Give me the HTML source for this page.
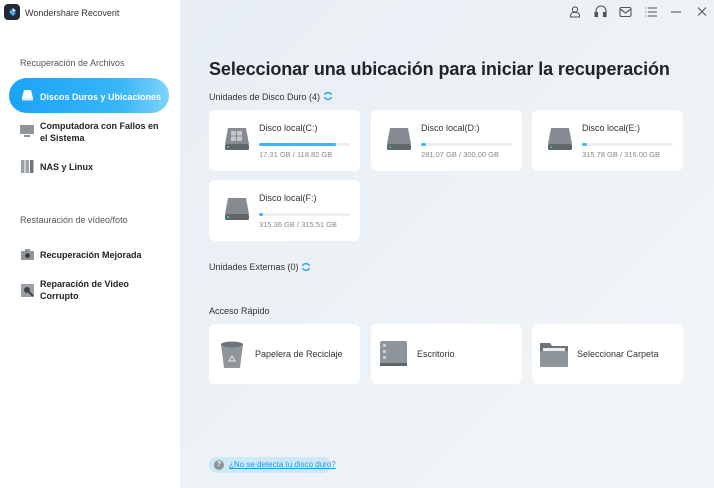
<!DOCTYPE html>
<html><head><meta charset="utf-8"><style>
*{margin:0;padding:0;box-sizing:border-box}
body{width:714px;height:488px;overflow:hidden;font-family:"Liberation Sans",sans-serif;position:relative;background:linear-gradient(135deg,#e6edf3 0%,#edf2f6 60%,#f3f6f9 100%)}
.side{position:absolute;left:0;top:0;width:180px;height:488px;background:#fff}
.abs{position:absolute}
.t{font-size:9px;color:#333}
.sec{font-size:9px;color:#555}
.nav{position:absolute;left:21px;font-size:9px;font-weight:bold;color:#222;line-height:12px}
.card{position:absolute;background:#fff;border-radius:6px;width:151px;height:61px}
.dn{position:absolute;left:50px;top:13px;font-size:9px;color:#333}
.bar{position:absolute;left:50px;top:33px;width:91px;height:3px;background:#eceef0;border-radius:2px}
.bar i{display:block;height:3px;background:#3fb8ec;border-radius:2px}
.gb{position:absolute;left:50px;top:40px;font-size:7.5px;color:#888}
.drv{position:absolute;left:15px;top:17px;width:26px;height:25px}
.qc{position:absolute;background:#fff;border-radius:6px;width:151px;height:60px;top:324px}
.qc span{position:absolute;left:46px;top:25px;font-size:9px;color:#333}
</style></head><body>
<div class="side">
 <div class="abs" style="left:4px;top:4px;width:16px;height:16px;background:#1f2b3a;border-radius:4px"><svg width="16" height="16"><path d="M9 4 L5 8 L9 12 L12 9 L9 8Z" fill="#4aa8ff"/><path d="M9 4 L12 7 L9 8Z" fill="#fff"/></svg></div>
 <div class="abs t" style="left:25px;top:8px">Wondershare Recoverit</div>
 <div class="abs sec" style="left:20px;top:58px">Recuperación de Archivos</div>
 <div class="abs" style="left:9px;top:78px;width:160px;height:35px;border-radius:18px;background:linear-gradient(90deg,#1aa3f5,#39b6f7 70%,#7fd3fa)"></div>
 <svg class="abs" style="left:21px;top:89px" width="13" height="12"><path d="M3 1h7l2 8H1z" fill="#fff"/><rect x="1" y="9" width="11" height="2.5" fill="#dff3ff"/></svg>
 <div class="nav" style="left:40px;top:91px;color:#fff">Discos Duros y Ubicaciones</div>
 <svg class="abs" style="left:20px;top:125px" width="14" height="12"><rect x="0" y="0" width="14" height="9" fill="#8e959b"/><rect x="4" y="10" width="6" height="2" fill="#8e959b"/></svg>
 <div class="nav" style="left:40px;top:120px">Computadora con Fallos en<br>el Sistema</div>
 <svg class="abs" style="left:21px;top:160px" width="13" height="13"><rect x="0" y="0" width="3.5" height="13" fill="#9aa0a6"/><rect x="4.5" y="0" width="3.5" height="13" fill="#9aa0a6"/><rect x="9" y="0" width="3.5" height="13" fill="#6d747a"/></svg>
 <div class="nav" style="left:40px;top:161px">NAS y Linux</div>
 <div class="abs sec" style="left:20px;top:215px">Restauración de vídeo/foto</div>
 <svg class="abs" style="left:21px;top:249px" width="13" height="11"><rect x="0" y="2" width="13" height="9" rx="1" fill="#8e959b"/><rect x="4" y="0" width="5" height="3" fill="#8e959b"/><circle cx="6.5" cy="6.5" r="2.3" fill="#333"/></svg>
 <div class="nav" style="left:40px;top:249px">Recuperación Mejorada</div>
 <svg class="abs" style="left:21px;top:284px" width="13" height="13"><rect x="0" y="0" width="13" height="13" fill="#9aa0a6"/><circle cx="6" cy="6" r="3" fill="#444"/><path d="M8 8l4 4" stroke="#444" stroke-width="2"/></svg>
 <div class="nav" style="left:40px;top:278px">Reparación de Video<br>Corrupto</div>
</div>

<svg class="abs" style="left:568px;top:5px" width="140" height="14" fill="none" stroke="#555" stroke-width="1.1">
 <circle cx="7" cy="4.5" r="2.6"/><path d="M2.5 12h9v-1.5a3 3 0 0 0-3-3h-3a3 3 0 0 0-3 3z"/>
 <path d="M28 9V6a5 5 0 0 1 10 0v3"/><rect x="27" y="7.5" width="2.5" height="4" fill="#555"/><rect x="35.5" y="7.5" width="2.5" height="4" fill="#555"/>
 <rect x="52" y="2.5" width="11" height="9" rx="1.5"/><path d="M52 4l5.5 4L63 4"/>
 <path d="M80 3h9M80 7h9M80 11h9"/><path d="M77.5 3h1M77.5 7h1M77.5 11h1"/>
 <path d="M103 7h10"/>
 <path d="M130 2.5l8 8M138 2.5l-8 8"/>
</svg>

<div class="abs" style="left:209px;top:59px;font-size:18px;letter-spacing:-0.1px;white-space:nowrap;font-weight:bold;color:#1f2329">Seleccionar una ubicación para iniciar la recuperación</div>
<div class="abs t" style="left:209px;top:92px">Unidades de Disco Duro (4)</div>
<svg class="abs" style="left:323px;top:91px" width="10" height="10" fill="none" stroke="#2ea6ee" stroke-width="1.5"><path d="M8.5 4A3.8 3.8 0 0 0 1.5 4M1.5 6a3.8 3.8 0 0 0 7 0"/></svg>

<svg width="0" height="0" style="position:absolute"><defs><symbol id="d" viewBox="0 0 26 25"><path d="M4 1h18l3 16H1z" fill="#858b91"/><rect x="1" y="17" width="24" height="6" rx="1.5" fill="#5e656b"/><circle cx="4" cy="20" r="1" fill="#3ddc84"/></symbol></defs></svg>

<div class="card" style="left:209px;top:110px"><svg class="drv"><use href="#d"/></svg><svg class="abs" style="left:22px;top:21px" width="12" height="11" fill="#c5c9cc"><rect x="0" y="0" width="5" height="4.5"/><rect x="6" y="0" width="5" height="4.5"/><rect x="0" y="5.5" width="5" height="4.5"/><rect x="6" y="5.5" width="5" height="4.5"/></svg><div class="dn">Disco local(C:)</div><div class="bar"><i style="width:77px"></i></div><div class="gb">17.31 GB / 118.82 GB</div></div>
<div class="card" style="left:371px;top:110px"><svg class="drv"><use href="#d"/></svg><div class="dn">Disco local(D:)</div><div class="bar"><i style="width:5px"></i></div><div class="gb">281.07 GB / 300.00 GB</div></div>
<div class="card" style="left:532px;top:110px"><svg class="drv"><use href="#d"/></svg><div class="dn">Disco local(E:)</div><div class="bar"><i style="width:5px"></i></div><div class="gb">315.78 GB / 316.00 GB</div></div>
<div class="card" style="left:209px;top:180px"><svg class="drv"><use href="#d"/></svg><div class="dn">Disco local(F:)</div><div class="bar"><i style="width:4px"></i></div><div class="gb">315.36 GB / 315.51 GB</div></div>

<div class="abs t" style="left:209px;top:262px">Unidades Externas (0)</div>
<svg class="abs" style="left:301px;top:262px" width="10" height="10" fill="none" stroke="#2ea6ee" stroke-width="1.5"><path d="M8.5 4A3.8 3.8 0 0 0 1.5 4M1.5 6a3.8 3.8 0 0 0 7 0"/></svg>

<div class="abs t" style="left:209px;top:306px">Acceso Rápido</div>
<div class="qc" style="left:209px"><svg class="abs" style="left:11px;top:17px" width="24" height="28"><path d="M1 3h22l-3 24H4z" fill="#8e959b"/><ellipse cx="12" cy="3.5" rx="11" ry="3" fill="#6d747a"/><path d="M9 20l3-5 3 5z" fill="none" stroke="#ddd" stroke-width="1.2"/></svg><span>Papelera de Reciclaje</span></div>
<div class="qc" style="left:371px"><svg class="abs" style="left:9px;top:17px" width="27" height="26"><rect x="0" y="0" width="27" height="24" rx="2" fill="#8e959b"/><rect x="0" y="22" width="27" height="3" fill="#5e656b"/><rect x="3" y="3" width="3" height="3" fill="#ccc"/><rect x="3" y="9" width="3" height="3" fill="#ccc"/><rect x="3" y="15" width="3" height="3" fill="#ccc"/></svg><span>Escritorio</span></div>
<div class="qc" style="left:532px"><svg class="abs" style="left:8px;top:17px" width="28" height="26"><path d="M0 2h10l2 3h16v20H0z" fill="#6d747a"/><rect x="3" y="7" width="22" height="5" fill="#eee"/><rect x="0" y="10" width="28" height="16" rx="1" fill="#8e959b"/></svg><span style="left:45px">Seleccionar Carpeta</span></div>

<div class="abs" style="left:209px;top:457px;width:122px;height:16px;border-radius:8px;background:#cde8f6"></div>
<div class="abs" style="left:214px;top:460px;width:10px;height:10px;border-radius:50%;background:#8c959c;color:#fff;font-size:7px;font-weight:bold;text-align:center;line-height:10px">?</div>
<div class="abs" style="left:229px;top:460px;font-size:8px;color:#1d9be5;text-decoration:underline">¿No se detecta tu disco duro?</div>
</body></html>
